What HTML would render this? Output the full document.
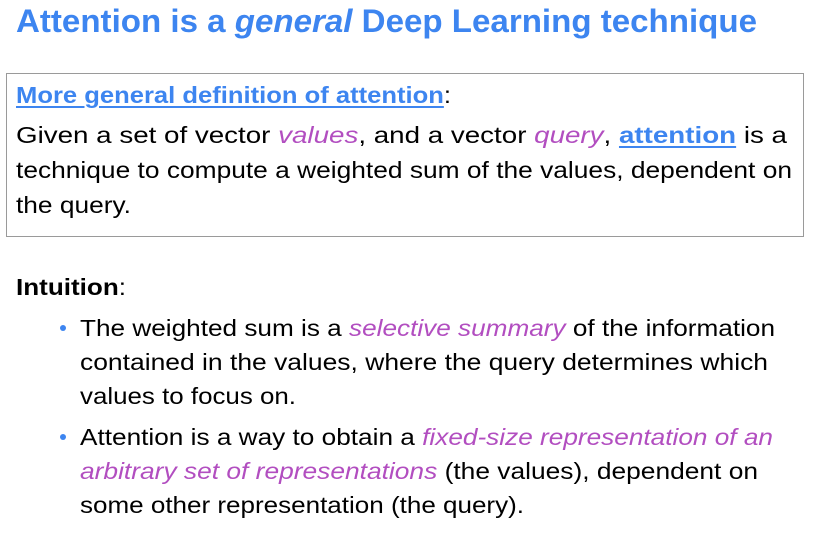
<!DOCTYPE html>
<html><head><meta charset="utf-8"><style>
html,body{margin:0;padding:0;background:#fff;width:821px;height:542px;overflow:hidden}
body{position:relative;font-family:"Liberation Sans",sans-serif;color:#000}
.l{position:absolute;white-space:nowrap;transform-origin:0 50%;line-height:1;}
.t{font-size:32px;font-weight:bold;color:#3d85f0}
.b{font-size:23.5px}
.p{color:#b24ec0;font-style:italic}
.u{color:#3d85f0;font-weight:bold;text-decoration:underline;text-decoration-thickness:2px;text-underline-offset:3px}
.box{position:absolute;left:6px;top:73px;width:796px;height:162px;border:1px solid #9a9a9a}
.dot{position:absolute;width:6px;height:6px;border-radius:50%;background:#3d85f0}
</style></head><body>
<div class="l t" style="left:16px;top:5px" data-tw="741">Attention is a <i>general</i> Deep Learning technique</div>
<div class="box"></div>
<div class="l b" style="left:16px;top:84px" data-tw="435"><span class="u">More general definition of attention</span>:</div>
<div class="l b" style="left:16px;top:124px" data-tw="771">Given a set of vector <span class="p">values</span>, and a vector <span class="p">query</span>, <span class="u">attention</span> is a</div>
<div class="l b" style="left:16px;top:159px" data-tw="776">technique to compute a weighted sum of the values, dependent on</div>
<div class="l b" style="left:16px;top:194px" data-tw="115">the query.</div>
<div class="l b" style="left:16px;top:276px" data-tw="110"><b>Intuition</b>:</div>
<div class="dot" style="left:60px;top:325px"></div>
<div class="l b" style="left:80px;top:317px" data-tw="695">The weighted sum is a <span class="p">selective summary</span> of the information</div>
<div class="l b" style="left:80px;top:351px" data-tw="688">contained in the values, where the query determines which</div>
<div class="l b" style="left:80px;top:385px" data-tw="216">values to focus on.</div>
<div class="dot" style="left:60px;top:434px"></div>
<div class="l b" style="left:80px;top:426px" data-tw="693">Attention is a way to obtain a <span class="p">fixed-size representation of an</span></div>
<div class="l b" style="left:80px;top:460px" data-tw="678"><span class="p">arbitrary set of representations</span> (the values), dependent on</div>
<div class="l b" style="left:80px;top:494px" data-tw="444">some other representation (the query).</div>
<script>
document.querySelectorAll('.l').forEach(function(e){
  var tw=+e.getAttribute('data-tw');var w=e.getBoundingClientRect().width;
  if(w>0)e.style.transform='scaleX('+(tw/w)+')';
});
</script>
</body></html>
